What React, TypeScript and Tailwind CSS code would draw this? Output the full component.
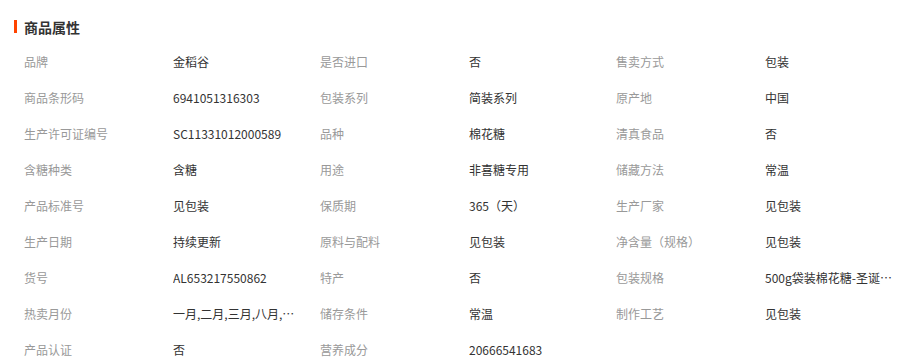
import React from "react";

const rows: [string, string][][] = [
  [["品牌", "金稻谷"], ["是否进口", "否"], ["售卖方式", "包装"]],
  [["商品条形码", "6941051316303"], ["包装系列", "简装系列"], ["原产地", "中国"]],
  [["生产许可证编号", "SC11331012000589"], ["品种", "棉花糖"], ["清真食品", "否"]],
  [["含糖种类", "含糖"], ["用途", "非喜糖专用"], ["储藏方法", "常温"]],
  [["产品标准号", "见包装"], ["保质期", "365（天）"], ["生产厂家", "见包装"]],
  [["生产日期", "持续更新"], ["原料与配料", "见包装"], ["净含量（规格）", "见包装"]],
  [["货号", "AL653217550862"], ["特产", "否"], ["包装规格", "500g袋装棉花糖-圣诞节快乐"]],
  [["热卖月份", "一月,二月,三月,八月,九月,十月"], ["储存条件", "常温"], ["制作工艺", "见包装"]],
  [["产品认证", "否"], ["营养成分", "20666541683"]],
];

export default function App() {
  return (
    <div
      className="w-[903px] h-[364px] overflow-hidden bg-white"
      style={{ fontFamily: '"Noto Sans CJK SC", "Microsoft YaHei", sans-serif' }}
    >
      <div className="flex items-center pt-[19px] pl-[14px] h-[34px]">
        <div className="w-[3px] h-[13px] bg-[#ff4400]" />
        <div className="ml-[7px] text-[14px] leading-[16px] font-bold text-[#333333]">商品属性</div>
      </div>
      <div className="pl-[24px] pt-[10px]">
        {rows.map((row, i) => (
          <div key={i} className="flex h-[36px] items-center text-[12px]">
            {row.map(([k, v], j) => (
              <div key={j} className="flex items-center">
                <div className="w-[149px] text-[#999999] whitespace-nowrap">{k}</div>
                <div className="w-[147px]">
                  <div className="max-w-[127px] text-[#333333] whitespace-nowrap overflow-hidden text-ellipsis">
                    {v}
                  </div>
                </div>
              </div>
            ))}
          </div>
        ))}
      </div>
    </div>
  );
}
